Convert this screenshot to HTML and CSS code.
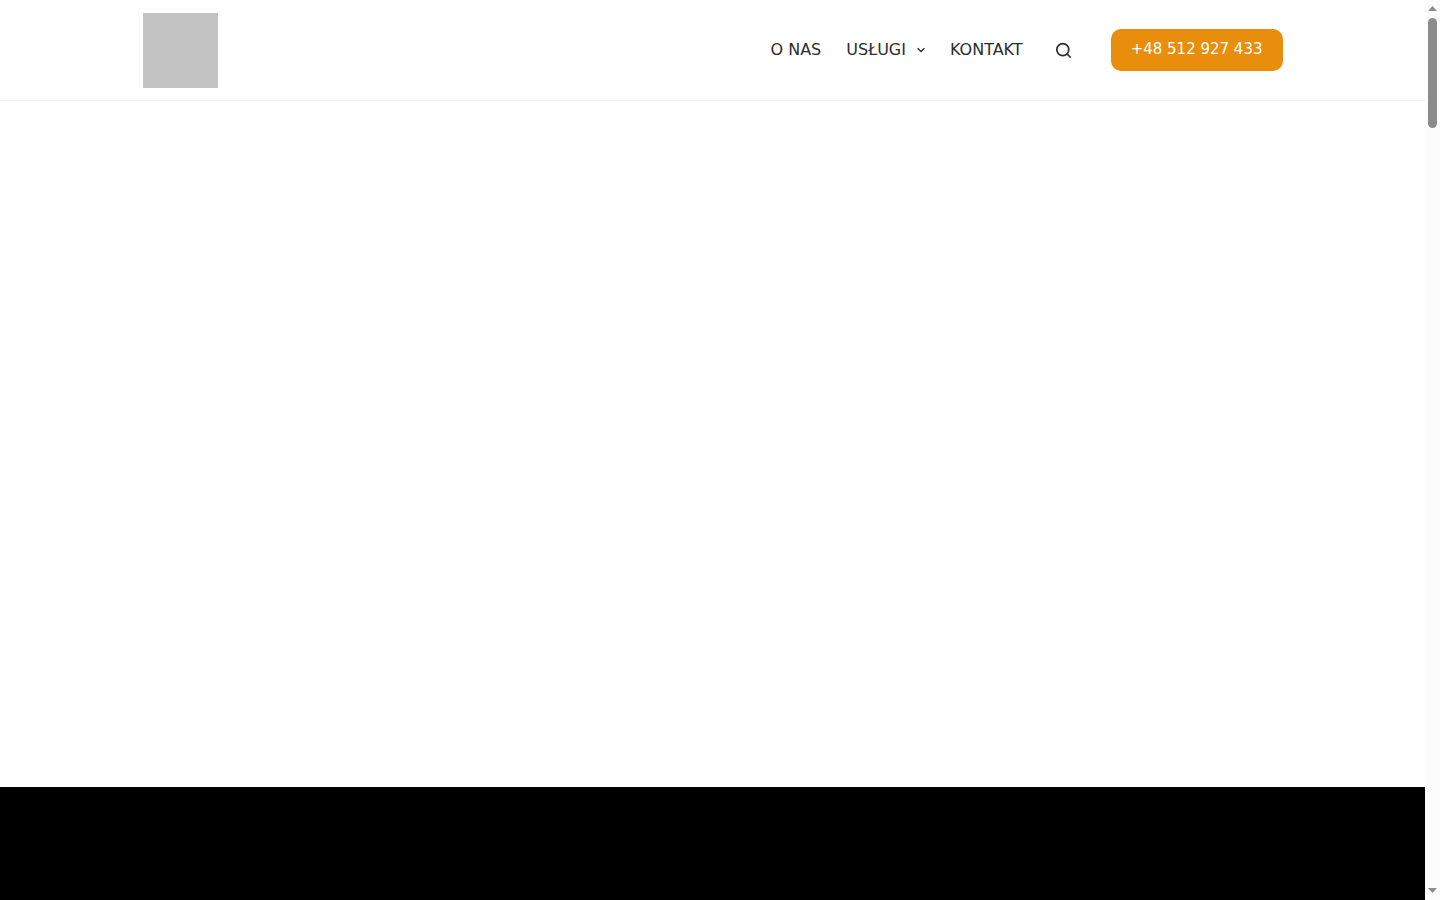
FILE: index.html
```html
<!DOCTYPE html>
<html lang="pl">
<head>
<meta charset="utf-8">
<meta name="viewport" content="width=device-width, initial-scale=1">
<title>Strona główna</title>
<link rel="stylesheet" href="styles.css">
</head>
<body>
<div class="window">
  <div class="page">
    <header class="header">
      <div class="container">
        <a class="logo" href="#" aria-label="Strona główna"></a>
        <nav class="menu">
          <a href="#">O NAS</a>
          <a class="has-children" href="#">USŁUGI
            <svg class="chevron" viewBox="0 0 8 8" aria-hidden="true"><path d="M0.6 2.3 4 5.6 7.4 2.3"/></svg>
          </a>
          <a href="#">KONTAKT</a>
        </nav>
        <button class="search" type="button" aria-label="Szukaj">
          <svg viewBox="0 0 15 15" aria-hidden="true"><circle cx="6.8" cy="6.6" r="6"/><path d="M11 10.8 14.7 14.5"/></svg>
        </button>
        <a class="phone" href="tel:+48512927433">+48 512 927 433</a>
      </div>
    </header>
    <main class="hero"></main>
    <section class="band"></section>
  </div>
  <div class="scrollbar" aria-hidden="true">
    <svg class="arrow" viewBox="0 0 9 5"><path d="M0 5 4.5 0 9 5Z"/></svg>
    <div class="track"><div class="thumb"></div></div>
    <svg class="arrow" viewBox="0 0 9 5"><path d="M0 0 4.5 5 9 0Z"/></svg>
  </div>
</div>
</body>
</html>
```
FILE: styles.css
```css
* {
  box-sizing: border-box;
}

body {
  margin: 0;
  background: #fefefe;
  color: #2c2c2c;
  font: 16px/24px "DejaVu Sans", sans-serif;
}

a {
  color: inherit;
  text-decoration: none;
}

.window {
  display: grid;
  grid-template-columns: 1fr 15px;
  height: 100vh;
}

.page {
  display: flex;
  flex-direction: column;
}

.header {
  background: #fff;
  border-bottom: 1px solid #f2f2f2;
}

.container {
  display: flex;
  align-items: center;
  max-width: 1140px;
  min-height: 100px;
  margin: 0 auto;
}

.logo {
  width: 75px;
  height: 75px;
  margin-right: auto;
  background: #c3c3c3;
}

.menu {
  display: flex;
  gap: 25px;
  margin-right: 33px;
}

.has-children {
  display: flex;
  align-items: center;
  gap: 11px;
}

.chevron {
  width: 8px;
  height: 8px;
  fill: none;
  stroke: #2c2c2c;
  stroke-width: 1.4;
}

.search {
  display: flex;
  margin: 0 40px 0 0;
  padding: 0;
  border: 0;
  background: none;
}

.search svg {
  width: 15px;
  height: 15px;
  overflow: visible;
  fill: none;
  stroke: #2c2c2c;
  stroke-width: 1.7;
}

.phone {
  padding: 8px 20px 10px;
  border-radius: 10px;
  background: #e88d0c;
  color: #fff;
  font-size: 15px;
}

.hero {
  flex: 1;
}

.band {
  height: 113px;
  background: #000;
}

.scrollbar {
  display: flex;
  flex-direction: column;
  align-items: center;
  gap: 7px;
  padding: 6px 0 7px;
  background: #fcfcfc;
}

.arrow {
  width: 9px;
  height: 5px;
  fill: #8b8b8b;
}

.track {
  flex: 1;
}

.thumb {
  width: 9px;
  height: 110px;
  border-radius: 5px;
  background: #8b8b8b;
}
```
